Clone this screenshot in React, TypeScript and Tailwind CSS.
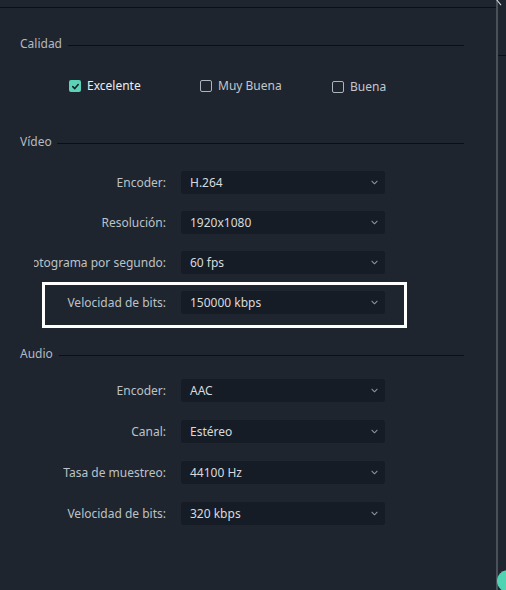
import type { ReactNode } from "react";

// ─── Data ─────────────────────────────────────────────────────

const VIDEO_ROWS = [
  { label: "Encoder:", value: "H.264" },
  { label: "Resolución:", value: "1920x1080" },
  { label: "Fotograma por segundo:", value: "60 fps" },
  { label: "Velocidad de bits:", value: "150000 kbps" },
];

const AUDIO_ROWS = [
  { label: "Encoder:", value: "AAC" },
  { label: "Canal:", value: "Estéreo" },
  { label: "Tasa de muestreo:", value: "44100 Hz" },
  { label: "Velocidad de bits:", value: "320 kbps" },
];

// ─── Pieces ───────────────────────────────────────────────────

function Chevron() {
  return (
    <svg viewBox="0 0 8 5" className="w-[7px] h-[5px]" aria-hidden="true">
      <polyline
        points="1 1 4 4 7 1"
        fill="none"
        stroke="#8c939b"
        strokeWidth={1.2}
        strokeLinecap="round"
        strokeLinejoin="round"
      />
    </svg>
  );
}

function SectionHeader({ title, lineGap }: { title: string; lineGap: string }) {
  return (
    <div className="flex items-center h-5">
      <span className="text-[12px] text-[#b4bac1]">{title}</span>
      <div className={`flex-1 h-px bg-[#0b0f14] mt-[3px] ${lineGap}`} />
    </div>
  );
}

function SelectRow({ label, value }: { label: string; value: string }) {
  return (
    <div className="flex items-center h-[23px]">
      <div className="w-[132px] ml-[34px] overflow-hidden flex justify-end">
        <span className="shrink-0 whitespace-nowrap text-[12px] text-[#bcc2c8]">{label}</span>
      </div>
      <div className="ml-[15px] w-[204px] h-[23px] rounded-[3px] bg-[#161c25] flex items-center justify-between pl-[9px] pr-[7px]">
        <span className="text-[12px] text-[#d6dade]">{value}</span>
        <Chevron />
      </div>
    </div>
  );
}

function CheckOption({ label, checked }: { label: string; checked?: boolean }) {
  return (
    <div className="flex items-center gap-[6px]">
      {checked ? (
        <span className="w-3 h-3 rounded-[2px] bg-[#5cd3b7] flex items-center justify-center">
          <svg viewBox="0 0 10 10" className="w-[9px] h-[9px]" aria-hidden="true">
            <polyline
              points="2 5.2 4.2 7.3 8 2.8"
              fill="none"
              stroke="#1b222b"
              strokeWidth={1.8}
              strokeLinecap="round"
              strokeLinejoin="round"
            />
          </svg>
        </span>
      ) : (
        <span className="w-3 h-3 rounded-[2px] border border-[#aeb4bb]" />
      )}
      <span className={`text-[12px] ${checked ? "text-[#eceef0]" : "text-[#c2c7cd]"}`}>
        {label}
      </span>
    </div>
  );
}

function Stack({ children, gap }: { children: ReactNode; gap: string }) {
  return <div className={`flex flex-col ${gap}`}>{children}</div>;
}

// ─── App ──────────────────────────────────────────────────────

export default function App() {
  return (
    <div
      className="relative w-[506px] h-[590px] overflow-hidden bg-[#1e252f] flex"
      style={{ fontFamily: '"Noto Sans", "Open Sans", sans-serif' }}
    >
      {/* ── Main settings panel ─────────────────────────── */}
      <div className="w-[496px] flex flex-col">
        <div className="mt-[7px] h-px bg-[#0c1016]" />

        <div className="pl-5 pr-8 mt-[26px]">
          <SectionHeader title="Calidad" lineGap="ml-[6px]" />
        </div>

        <div className="flex h-5 mt-[23px] pl-[69px]">
          <div className="w-[131px]">
            <CheckOption label="Excelente" checked />
          </div>
          <div className="w-[132px]">
            <CheckOption label="Muy Buena" />
          </div>
          <CheckOption label="Buena" />
        </div>

        <div className="pl-5 pr-8 mt-[35px]">
          <SectionHeader title="Vídeo" lineGap="ml-[5px]" />
        </div>

        <div className="mt-[19px]">
          <Stack gap="gap-[17px]">
            {VIDEO_ROWS.map((r) => (
              <SelectRow key={r.label + r.value} label={r.label} value={r.value} />
            ))}
          </Stack>
        </div>

        <div className="pl-5 pr-8 mt-[30px]">
          <SectionHeader title="Audio" lineGap="ml-[6px]" />
        </div>

        <div className="mt-[15px]">
          <Stack gap="gap-[18px]">
            {AUDIO_ROWS.map((r) => (
              <SelectRow key={r.label + r.value} label={r.label} value={r.value} />
            ))}
          </Stack>
        </div>
      </div>

      {/* ── Divider + neighbouring panel ────────────────── */}
      <div className="w-[2px] bg-[#4a5159]" />
      <div className="flex-1 flex flex-col">
        <div className="mt-[55px] h-px bg-[#0c1016]" />
      </div>

      {/* ── Overlays ────────────────────────────────────── */}
      <div className="absolute left-[42px] top-[282px] w-[365px] h-[46px] border-[3px] border-white" />
      <div className="absolute left-[497px] top-[570px] w-[22px] h-[22px] rounded-full bg-[#4fd3b3]" />
      <div className="absolute left-[498px] top-[-2px] w-px h-[8px] bg-[#d8dce0] rotate-[-40deg]" />
    </div>
  );
}
